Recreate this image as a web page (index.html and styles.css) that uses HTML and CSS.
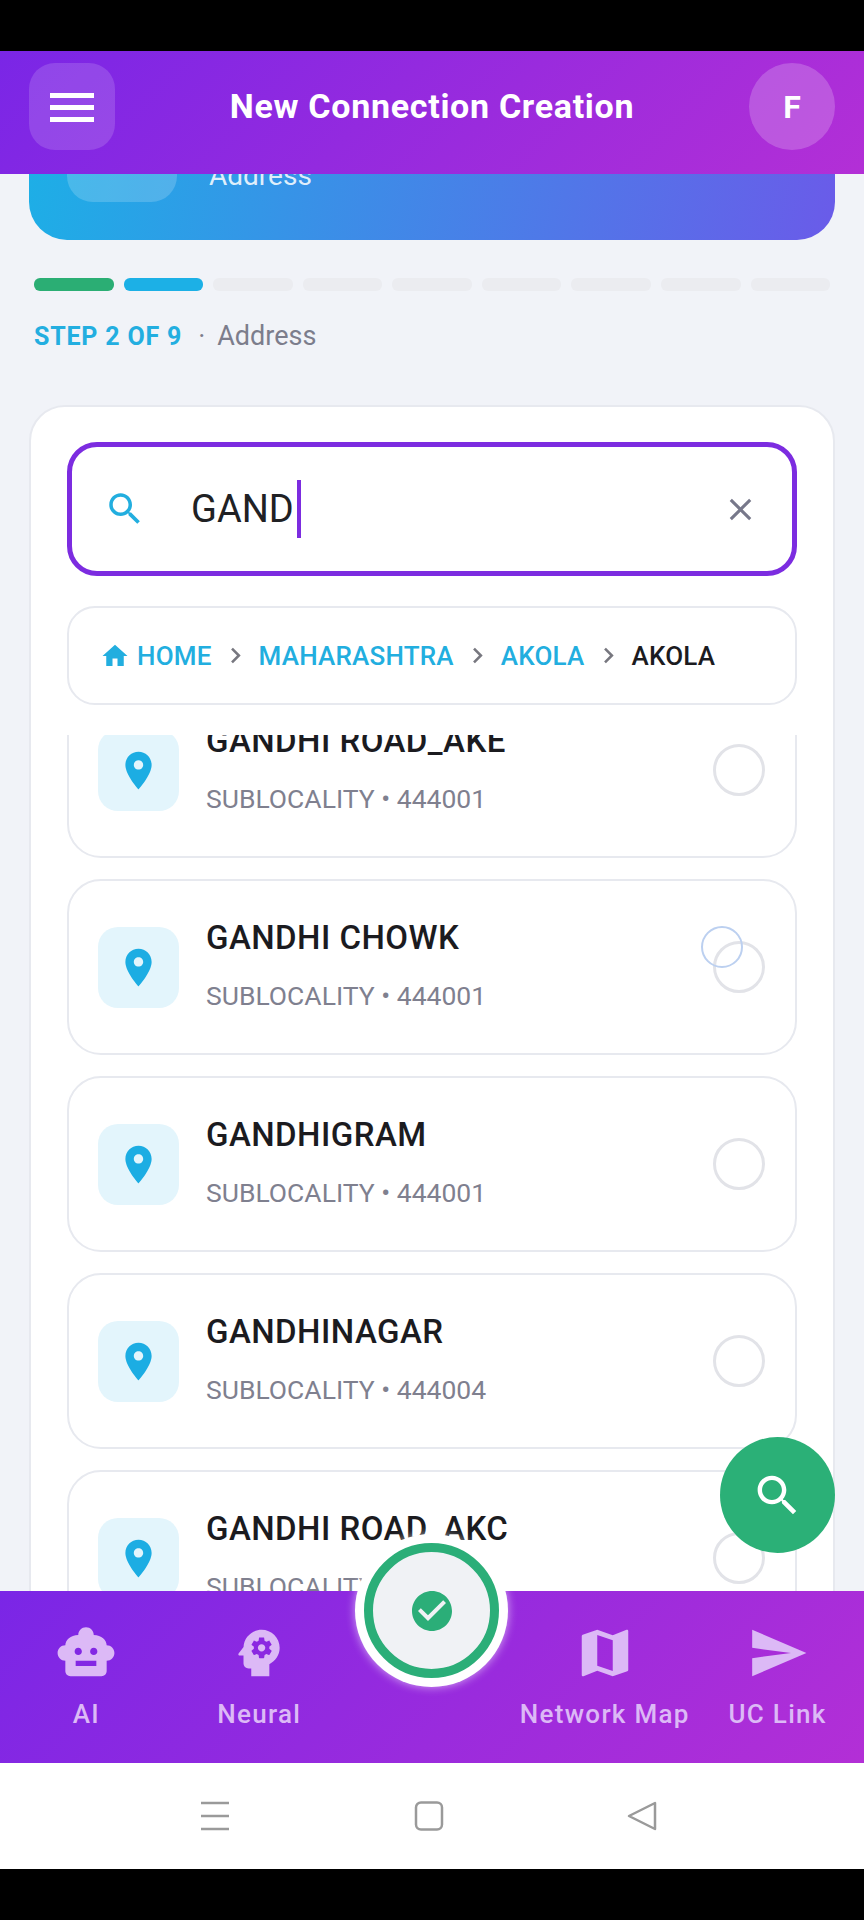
FILE: index.html
```html
<!DOCTYPE html>
<html>
<head>
  <meta charset="UTF-8">
  <title>New Connection Creation</title>
  <link rel="stylesheet" href="styles.css">
</head>
<body>
  <div class="app">
    <div class="black-bar"></div>

    <header class="top-bar">
      <button class="menu-btn">
        <svg viewBox="0 0 44 30" width="44" height="30"><path d="M0 1h44v5H0zM0 13h44v5H0zM0 25h44v5H0z" fill="#fff"/></svg>
      </button>
      <h1>New Connection Creation</h1>
      <div class="avatar">F</div>
    </header>

    <main class="content">
      <section class="hero">
        <div class="hero-icon"></div>
        <div class="hero-label">Address</div>
      </section>

      <div class="progress">
        <span class="seg done"></span>
        <span class="seg active"></span>
        <span class="seg"></span>
        <span class="seg"></span>
        <span class="seg"></span>
        <span class="seg"></span>
        <span class="seg"></span>
        <span class="seg"></span>
        <span class="seg"></span>
      </div>
      <div class="step-line"><b>STEP 2 OF 9</b><i>·</i><span>Address</span></div>

      <section class="card">
        <div class="search-box">
          <svg class="search-icon" viewBox="0 0 24 24"><path d="M15.5 14h-.79l-.28-.27C15.41 12.59 16 11.11 16 9.5 16 5.91 13.09 3 9.5 3S3 5.91 3 9.5 5.91 16 9.5 16c1.61 0 3.09-.59 4.23-1.57l.27.28v.79l5 4.99L20.49 19l-4.99-5zm-6 0C7.01 14 5 11.99 5 9.5S7.01 5 9.5 5 14 7.01 14 9.5 11.99 14 9.5 14z"/></svg>
          <div class="search-text">GAND</div>
          <div class="caret"></div>
          <svg class="clear-icon" viewBox="0 0 24 24"><path d="M19 6.41L17.59 5 12 10.59 6.41 5 5 6.41 10.59 12 5 17.59 6.41 19 12 13.41 17.59 19 19 17.59 13.41 12z"/></svg>
        </div>

        <nav class="crumbs">
          <svg class="home-icon" viewBox="0 0 24 24"><path d="M10 20v-6h4v6h5v-8h3L12 3 2 12h3v8z"/></svg>
          <a>HOME</a>
          <svg class="chev" viewBox="0 0 24 24"><path d="M10 6L8.59 7.41 13.17 12l-4.58 4.59L10 18l6-6z"/></svg>
          <a>MAHARASHTRA</a>
          <svg class="chev" viewBox="0 0 24 24"><path d="M10 6L8.59 7.41 13.17 12l-4.58 4.59L10 18l6-6z"/></svg>
          <a>AKOLA</a>
          <svg class="chev" viewBox="0 0 24 24"><path d="M10 6L8.59 7.41 13.17 12l-4.58 4.59L10 18l6-6z"/></svg>
          <a class="current">AKOLA</a>
        </nav>

        <div class="list">
          <div class="item first">
            <div class="pin-box"><svg viewBox="0 0 24 24"><path d="M12 2C8.13 2 5 5.13 5 9c0 5.25 7 13 7 13s7-7.75 7-13c0-3.87-3.13-7-7-7zm0 9.5c-1.38 0-2.5-1.12-2.5-2.5s1.12-2.5 2.5-2.5 2.5 1.12 2.5 2.5-1.12 2.5-2.5 2.5z"/></svg></div>
            <div class="item-text"><div class="item-name">GANDHI ROAD_AKE</div><div class="item-sub">SUBLOCALITY • 444001</div></div>
            <div class="radio"></div>
          </div>
          <div class="item">
            <div class="pin-box"><svg viewBox="0 0 24 24"><path d="M12 2C8.13 2 5 5.13 5 9c0 5.25 7 13 7 13s7-7.75 7-13c0-3.87-3.13-7-7-7zm0 9.5c-1.38 0-2.5-1.12-2.5-2.5s1.12-2.5 2.5-2.5 2.5 1.12 2.5 2.5-1.12 2.5-2.5 2.5z"/></svg></div>
            <div class="item-text"><div class="item-name">GANDHI CHOWK</div><div class="item-sub">SUBLOCALITY • 444001</div></div>
            <div class="radio"><span class="touch-ring"></span></div>
          </div>
          <div class="item">
            <div class="pin-box"><svg viewBox="0 0 24 24"><path d="M12 2C8.13 2 5 5.13 5 9c0 5.25 7 13 7 13s7-7.75 7-13c0-3.87-3.13-7-7-7zm0 9.5c-1.38 0-2.5-1.12-2.5-2.5s1.12-2.5 2.5-2.5 2.5 1.12 2.5 2.5-1.12 2.5-2.5 2.5z"/></svg></div>
            <div class="item-text"><div class="item-name">GANDHIGRAM</div><div class="item-sub">SUBLOCALITY • 444001</div></div>
            <div class="radio"></div>
          </div>
          <div class="item">
            <div class="pin-box"><svg viewBox="0 0 24 24"><path d="M12 2C8.13 2 5 5.13 5 9c0 5.25 7 13 7 13s7-7.75 7-13c0-3.87-3.13-7-7-7zm0 9.5c-1.38 0-2.5-1.12-2.5-2.5s1.12-2.5 2.5-2.5 2.5 1.12 2.5 2.5-1.12 2.5-2.5 2.5z"/></svg></div>
            <div class="item-text"><div class="item-name">GANDHINAGAR</div><div class="item-sub">SUBLOCALITY • 444004</div></div>
            <div class="radio"></div>
          </div>
          <div class="item">
            <div class="pin-box"><svg viewBox="0 0 24 24"><path d="M12 2C8.13 2 5 5.13 5 9c0 5.25 7 13 7 13s7-7.75 7-13c0-3.87-3.13-7-7-7zm0 9.5c-1.38 0-2.5-1.12-2.5-2.5s1.12-2.5 2.5-2.5 2.5 1.12 2.5 2.5-1.12 2.5-2.5 2.5z"/></svg></div>
            <div class="item-text"><div class="item-name">GANDHI ROAD_AKC</div><div class="item-sub">SUBLOCALITY • 444001</div></div>
            <div class="radio"></div>
          </div>
        </div>
      </section>

      <button class="fab">
        <svg viewBox="0 0 24 24"><path d="M15.5 14h-.79l-.28-.27C15.41 12.59 16 11.11 16 9.5 16 5.91 13.09 3 9.5 3S3 5.91 3 9.5 5.91 16 9.5 16c1.61 0 3.09-.59 4.23-1.57l.27.28v.79l5 4.99L20.49 19l-4.99-5zm-6 0C7.01 14 5 11.99 5 9.5S7.01 5 9.5 5 14 7.01 14 9.5 11.99 14 9.5 14z"/></svg>
      </button>
    </main>

    <footer class="bottom-nav">
      <div class="tab">
        <svg viewBox="0 0 24 24"><path d="M20 9c0-2-2-4-5-4 0-1.66-1.34-3-3-3S9 3.34 9 5C6 5 4 7 4 9c-1.66 0-3 1.34-3 3s1.34 3 3 3v4c0 1.100.9 2 2 2h12c1.100 0 2-.9 2-2v-4c1.660 0 3-1.340 3-3s-1.340-3-3-3zM7.600 11.400c0-.8.6-1.400 1.400-1.400s1.400.6 1.400 1.400S9.800 12.800 9 12.800s-1.400-.6-1.400-1.400zM16 17H8v-2h8v2zm-1-4.200c-.8 0-1.400-.6-1.400-1.400S14.200 10 15 10s1.400.6 1.400 1.400-.6 1.400-1.400 1.400z"/></svg>
        <span>AI</span>
      </div>
      <div class="tab">
        <svg viewBox="0 0 24 24"><path d="M13 8.57c-.79 0-1.43.64-1.43 1.43s.64 1.43 1.43 1.43 1.43-.64 1.43-1.43-.64-1.43-1.43-1.43z"/><path d="M13 3C9.25 3 6.2 5.94 6.02 9.64L4.1 12.2c-.25.33-.01.8.4.8H6v3c0 1.1.9 2 2 2h1v3h7v-4.68c2.36-1.12 4-3.53 4-6.32 0-3.87-3.13-7-7-7zm3 7c0 .13-.01.26-.02.39l.83.66c.08.06.1.16.05.25l-.8 1.39c-.05.09-.16.12-.24.09l-.99-.4c-.21.16-.43.29-.67.39L14 13.83c-.01.1-.1.17-.2.17h-1.6c-.1 0-.18-.07-.2-.17l-.15-1.06c-.25-.1-.47-.23-.68-.39l-.99.4c-.09.03-.2 0-.25-.09l-.8-1.39c-.05-.08-.03-.19.05-.25l.84-.66c-.01-.13-.02-.26-.02-.39s.02-.27.04-.39l-.85-.66c-.08-.06-.1-.16-.05-.26l.8-1.38c.05-.09.15-.12.24-.09l1 .4c.2-.15.43-.29.67-.39l.15-1.06c.02-.1.1-.17.2-.17h1.6c.1 0 .18.07.2.17l.15 1.06c.24.1.46.23.67.39l1-.4c.09-.03.2 0 .24.09l.8 1.38c.05.09.03.2-.05.26l-.85.66c.03.12.04.25.04.39z"/></svg>
        <span>Neural</span>
      </div>
      <div class="tab"></div>
      <div class="tab">
        <svg viewBox="0 0 24 24"><path d="M20.5 3l-.16.03L15 5.1 9 3 3.36 4.9c-.21.07-.36.25-.36.48V20.5c0 .28.22.5.5.5l.16-.03L9 18.9l6 2.1 5.64-1.9c.21-.07.36-.25.36-.48V3.5c0-.28-.22-.5-.5-.5zM15 19l-6-2.11V5l6 2.11V19z"/></svg>
        <span>Network Map</span>
      </div>
      <div class="tab">
        <svg viewBox="0 0 24 24"><path d="M2.01 21L2 14l15-2-15-2 .01-7L23 12 2.01 21z"/></svg>
        <span>UC Link</span>
      </div>

      <div class="center-btn">
        <div class="center-ring">
          <svg viewBox="0 0 24 24"><path d="M12 2C6.48 2 2 6.48 2 12s4.48 10 10 10 10-4.48 10-10S17.52 2 12 2zm-2 15l-5-5 1.41-1.41L10 14.17l7.59-7.59L19 8l-9 9z"/></svg>
        </div>
      </div>
    </footer>

    <div class="system-nav">
      <svg viewBox="0 0 30 30" width="30" height="30"><path d="M1 2h28M1 15h28M1 28h28" stroke="#9a9a9a" stroke-width="2.5" fill="none"/></svg>
      <svg viewBox="0 0 30 30" width="30" height="30"><rect x="2" y="1.5" width="26" height="27" rx="5" stroke="#9a9a9a" stroke-width="2.5" fill="none"/></svg>
      <svg viewBox="0 0 30 30" width="30" height="30"><path d="M28 2v26L2 15z" stroke="#9a9a9a" stroke-width="2.5" stroke-linejoin="round" fill="none"/></svg>
    </div>

    <div class="black-bar"></div>
  </div>
</body>
</html>
```

FILE: styles.css
```css
* {
  box-sizing: border-box;
}

body {
  margin: 0;
  background-color: #000;
  font-family: Roboto, "Liberation Sans", sans-serif;
}

.app {
  display: flex;
  flex-direction: column;
  width: 864px;
  height: 1920px;
  overflow: hidden;
}

.black-bar {
  flex: 0 0 51px;
  background-color: #000;
}

.top-bar {
  flex: 0 0 123px;
  display: flex;
  align-items: flex-start;
  justify-content: space-between;
  padding: 12px 29px 0;
  background: linear-gradient(135deg, #7a26e6, #b32fd6);
  position: relative;
  z-index: 2;
}

.top-bar h1 {
  margin: 0;
  font-size: 34px;
  font-weight: 700;
  line-height: 87px;
  letter-spacing: 0.7px;
  color: #fff;
}

.menu-btn {
  width: 86px;
  height: 87px;
  display: flex;
  align-items: center;
  justify-content: center;
  padding: 0;
  border: none;
  border-radius: 26px;
  background-color: rgba(255, 255, 255, 0.15);
}

.avatar {
  width: 86px;
  height: 87px;
  display: flex;
  align-items: center;
  justify-content: center;
  border-radius: 50%;
  background-color: rgba(255, 255, 255, 0.2);
  color: #fff;
  font-size: 32px;
  font-weight: 700;
}

.content {
  flex: 1;
  min-height: 0;
  display: flex;
  flex-direction: column;
  padding: 0 29px;
  background-color: #f1f3f8;
  position: relative;
}

/* page is scrolled, only the bottom of this card is visible */
.hero {
  flex: none;
  height: 170px;
  margin-top: -104px;
  display: flex;
  align-items: flex-end;
  gap: 32px;
  padding: 0 38px 38px;
  border-radius: 0 0 38px 38px;
  background: linear-gradient(100deg, #1cb0e6, #6a5be9);
}

.hero-icon {
  width: 110px;
  height: 110px;
  border-radius: 26px;
  background-color: rgba(255, 255, 255, 0.18);
}

.hero-label {
  margin-bottom: 10px;
  font-size: 28px;
  color: rgba(255, 255, 255, 0.85);
}

.progress {
  flex: none;
  display: flex;
  gap: 10px;
  margin-top: 38px;
  padding: 0 5px;
}

.seg {
  flex: 1;
  height: 13px;
  border-radius: 6px;
  background-color: #ebecf0;
}

.seg.done {
  background-color: #2bae74;
}

.seg.active {
  background-color: #1cb0e6;
}

.step-line {
  flex: none;
  display: flex;
  align-items: center;
  height: 30px;
  margin-top: 30px;
  padding-left: 5px;
  font-size: 27px;
  color: #7c7d8c;
}

.step-line b {
  font-size: 25px;
  font-weight: 700;
  letter-spacing: 0.8px;
  color: #23aee0;
}

.step-line i {
  margin: 0 12px 0 16px;
  font-style: normal;
}

.card {
  flex: 1;
  min-height: 0;
  display: flex;
  flex-direction: column;
  margin-top: 54px;
  margin-bottom: -60px;
  padding: 35px 36px 0;
  border: 2px solid #e7e9ef;
  border-radius: 36px;
  background-color: #fff;
}

.search-box {
  flex: 0 0 134px;
  display: flex;
  align-items: center;
  padding: 0 36px;
  border: 5px solid #7c2ce0;
  border-radius: 30px;
}

.search-icon {
  width: 42px;
  height: 42px;
  margin-left: -4px;
  fill: #22aedf;
}

.search-text {
  margin-left: 45px;
  font-size: 38px;
  color: #202124;
}

.caret {
  width: 4px;
  height: 58px;
  margin-left: 3px;
  background-color: #7c2ce0;
}

.clear-icon {
  width: 37px;
  height: 37px;
  margin-left: auto;
  margin-right: -3px;
  fill: #77788a;
}

.crumbs {
  flex: 0 0 99px;
  display: flex;
  align-items: center;
  margin-top: 30px;
  padding: 0 31px;
  border: 2px solid #e7e9ef;
  border-radius: 28px;
  font-size: 26px;
  font-weight: 500;
  letter-spacing: 0.2px;
}

.crumbs a {
  color: #22aedf;
}

.crumbs a.current {
  color: #1b1b1f;
}

.home-icon {
  width: 30px;
  height: 30px;
  margin-right: 7px;
  fill: #22aedf;
}

.chev {
  width: 31px;
  height: 31px;
  margin: 0 8px;
  fill: #77777f;
}

.list {
  flex: 1;
  min-height: 0;
  display: flex;
  flex-direction: column;
  gap: 21px;
  margin-top: 30px;
  overflow: hidden;
}

.item {
  flex: 0 0 176px;
  display: flex;
  align-items: center;
  padding: 0 30px 0 29px;
  border: 2px solid #e7e9ef;
  border-radius: 34px;
}

/* list is scrolled a little */
.item.first {
  margin-top: -53px;
}

.pin-box {
  flex: none;
  width: 81px;
  height: 81px;
  display: flex;
  align-items: center;
  justify-content: center;
  border-radius: 20px;
  background-color: #e3f5fc;
}

.pin-box svg {
  width: 45px;
  height: 45px;
  fill: #1cade3;
}

.item-text {
  flex: 1;
  margin-left: 27px;
  margin-top: -3px;
}

.item-name {
  font-size: 33px;
  font-weight: 500;
  line-height: 36px;
  letter-spacing: 0.45px;
  color: #1b1b1f;
}

.item-sub {
  margin-top: 25px;
  font-size: 26.5px;
  line-height: 30px;
  color: #7f808f;
}

.radio {
  flex: none;
  width: 52px;
  height: 52px;
  border: 3px solid #e2e3e8;
  border-radius: 50%;
  position: relative;
}

.touch-ring {
  position: absolute;
  left: -15px;
  top: -18px;
  width: 42px;
  height: 42px;
  border: 2px solid #bcd0f0;
  border-radius: 50%;
}

.fab {
  position: absolute;
  right: 29px;
  bottom: 38px;
  width: 115px;
  height: 116px;
  display: flex;
  align-items: center;
  justify-content: center;
  padding: 0;
  border: none;
  border-radius: 50%;
  background-color: #2bb077;
}

.fab svg {
  width: 53px;
  height: 53px;
  fill: #fff;
}

.bottom-nav {
  flex: 0 0 172px;
  display: grid;
  grid-template-columns: repeat(5, 1fr);
  background: linear-gradient(135deg, #7a26e6, #b32fd6);
  position: relative;
  z-index: 2;
}

.tab {
  display: flex;
  flex-direction: column;
  align-items: center;
  padding-top: 31px;
  white-space: nowrap;
}

.tab svg {
  width: 62px;
  height: 62px;
  fill: #dcb9f6;
}

.tab span {
  margin-top: 15px;
  font-size: 26px;
  font-weight: 500;
  line-height: 30px;
  letter-spacing: 1.3px;
  color: #dcb9f6;
}

.center-btn {
  position: absolute;
  left: 355px;
  top: -57px;
  width: 153px;
  height: 153px;
  display: flex;
  align-items: center;
  justify-content: center;
  border-radius: 50%;
  background-color: #fff;
  box-shadow: 0 0 10px rgba(255, 255, 255, 0.6);
}

.center-ring {
  width: 135px;
  height: 135px;
  display: flex;
  align-items: center;
  justify-content: center;
  border: 9px solid #2bae78;
  border-radius: 50%;
  background-color: #f0f2f5;
}

.center-ring svg {
  width: 48px;
  height: 48px;
  fill: #2bae78;
}

.system-nav {
  flex: 0 0 106px;
  display: flex;
  align-items: center;
  background-color: #fff;
  padding: 0 207px 0 200px;
  justify-content: space-between;
}
```
